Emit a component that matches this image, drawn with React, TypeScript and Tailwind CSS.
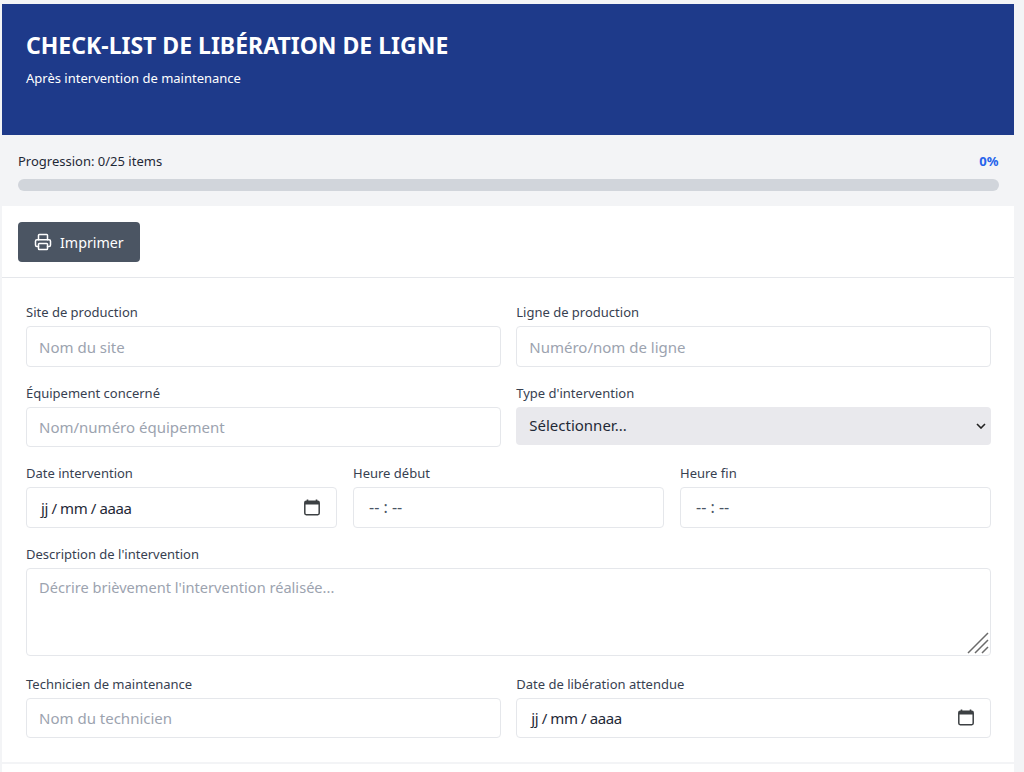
import { Printer } from "lucide-react";

const inputClass =
  "block w-full h-[40.5px] rounded border border-[#e5e7eb] bg-white px-3 pt-[1px] text-[15px] text-[#1f2937] placeholder:text-[#9ca3af] outline-none";

const Label = ({ text }: { text: string }) => (
  <label className="block mb-1 h-5 text-[13px] leading-5 text-[#374151]">{text}</label>
);

const TextField = ({ label, placeholder }: { label: string; placeholder: string }) => (
  <div>
    <Label text={label} />
    <input type="text" placeholder={placeholder} className={inputClass} />
  </div>
);

const CalendarIcon = () => (
  <svg width="16" height="17" viewBox="0 0 16 17" fill="none" className="text-[#3c4043]">
    <path d="M3.5 0.5v2M12.5 0.5v2" stroke="currentColor" strokeWidth="1.6" />
    <rect x="0.8" y="2.3" width="14.4" height="13.4" rx="1.4" stroke="currentColor" strokeWidth="1.5" />
    <rect x="1" y="2.5" width="14" height="3" fill="currentColor" />
  </svg>
);

const DateField = ({ label }: { label: string }) => (
  <div>
    <Label text={label} />
    <div className="flex h-[40.5px] items-center justify-between rounded border border-[#e5e7eb] bg-white pl-[14px] pr-4">
      <span className="pt-[1px] text-[15px] tracking-[-0.4px] text-[#1f2937]">jj / mm / aaaa</span>
      <CalendarIcon />
    </div>
  </div>
);

const TimeField = ({ label }: { label: string }) => (
  <div>
    <Label text={label} />
    <div className="flex h-[40.5px] items-center rounded border border-[#e5e7eb] bg-white px-[15px]">
      <span className="text-[16px] text-[#4b5563]">-- : --</span>
    </div>
  </div>
);

export default function App() {
  return (
    <div className="h-[772px] overflow-hidden bg-[#f3f4f6] pl-[2px] pr-[10px] pt-[4px] font-['Noto_Sans',sans-serif]">
      <div className="bg-white">
        <header className="h-[131px] bg-[#1e3a8a] px-6 pt-[25px] text-white">
          <h1 className="text-[23px] font-bold leading-8">CHECK-LIST DE LIBÉRATION DE LIGNE</h1>
          <p className="mt-[7px] text-[13px] leading-5">Après intervention de maintenance</p>
        </header>

        <div className="h-[71px] bg-[#f3f4f6] pl-4 pr-[15.5px] pt-4">
          <div className="mb-2 flex items-center justify-between text-[13px] leading-5">
            <span className="text-[#1f2937]">Progression: 0/25 items</span>
            <span className="font-bold text-[#2563eb]">0%</span>
          </div>
          <div className="h-3 rounded-full bg-[#d1d5db]" />
        </div>

        <div className="border-b border-[#e5e7eb] px-4 pb-[15px] pt-4">
          <button className="flex h-10 w-[121.5px] items-center gap-2 rounded bg-[#4b5563] pl-4 text-[14.25px] text-white">
            <Printer size={18} />
            <span className="pt-[1px]">Imprimer</span>
          </button>
        </div>

        <div className="flex flex-col gap-4 border-b-2 border-[#f3f4f6] pb-6 pl-6 pr-[23px] pt-6">
          <div className="grid grid-cols-2 gap-x-[15.5px]">
            <TextField label="Site de production" placeholder="Nom du site" />
            <TextField label="Ligne de production" placeholder="Numéro/nom de ligne" />
          </div>
          <div className="grid grid-cols-2 gap-x-[15.5px]">
            <TextField label="Équipement concerné" placeholder="Nom/numéro équipement" />
            <div>
              <Label text="Type d'intervention" />
              <div className="relative">
                <select className="block h-[38px] w-full appearance-none rounded bg-[#e9e9ed] pl-[13px] text-[15px] text-[#1f2937]">
                  <option>Sélectionner...</option>
                </select>
                <svg width="10" height="6" viewBox="0 0 10 6" fill="none" className="absolute right-[5px] top-[16px] text-[#222222]">
                  <path d="M1 1l4 4 4-4" stroke="currentColor" strokeWidth="1.6" />
                </svg>
              </div>
            </div>
          </div>
          <div className="grid grid-cols-3 gap-4">
            <DateField label="Date intervention" />
            <TimeField label="Heure début" />
            <TimeField label="Heure fin" />
          </div>
          <div>
            <Label text="Description de l'intervention" />
            <div className="relative">
              <textarea
                placeholder="Décrire brièvement l'intervention réalisée..."
                className="block h-[88px] w-full resize-none rounded border border-[#e5e7eb] bg-white px-3 py-2 text-[14.6px] text-[#1f2937] placeholder:text-[#9ca3af] outline-none"
              />
              <svg width="22" height="22" viewBox="0 0 22 22" className="absolute bottom-[2px] right-[2px] text-[#6b6b6b]">
                <path d="M1 21L21 1M8 21L21 8M15 21L21 15" stroke="currentColor" strokeWidth="1.5" />
              </svg>
            </div>
          </div>
          <div className="mt-[2px] grid grid-cols-2 gap-x-[15.5px]">
            <TextField label="Technicien de maintenance" placeholder="Nom du technicien" />
            <DateField label="Date de libération attendue" />
          </div>
        </div>
        <div className="h-20" />
      </div>
    </div>
  );
}
